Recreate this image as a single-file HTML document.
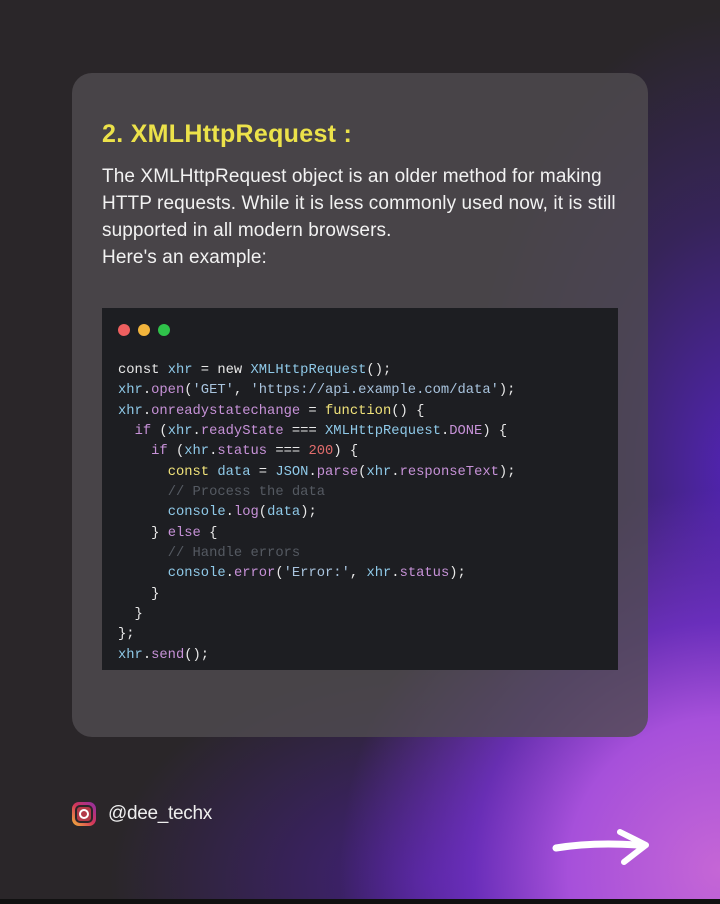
<!DOCTYPE html>
<html><head><meta charset="utf-8"><style>
html,body{margin:0;padding:0}
body{width:720px;height:904px;position:relative;overflow:hidden;background:#2a2629;font-family:"Liberation Sans",sans-serif}
.bg{position:absolute;inset:0;background:
radial-gradient(ellipse 380px 380px at 720px 870px,#c566d6 0%,#a650da 40%,rgba(120,50,210,0.75) 65%,rgba(60,30,110,0) 100%),
radial-gradient(ellipse 280px 460px at 740px 470px,rgba(85,35,190,0.95) 0%,rgba(65,35,130,0.55) 55%,rgba(40,30,50,0) 100%),
radial-gradient(ellipse 320px 220px at 430px 880px,rgba(70,30,140,0.85) 0%,rgba(50,30,80,0) 100%),
#2a2629;}
.strip{position:absolute;left:0;right:0;bottom:0;height:5px;background:#111}
.card{position:absolute;left:72px;top:73px;width:576px;height:664px;border-radius:20px;background:rgba(80,76,80,0.8)}
h2{position:absolute;left:102px;top:120px;margin:0;font-size:25px;font-weight:bold;color:#ece24a;letter-spacing:0.3px}
.p{position:absolute;left:102px;top:163px;color:#f2f2f2;font-size:19px;line-height:27px;white-space:nowrap;letter-spacing:0.1px}
.code{position:absolute;left:102px;top:308px;width:516px;height:362px;background:#1d1e22}
.dot{position:absolute;top:324px;width:12px;height:12px;border-radius:50%}
pre{position:absolute;left:118px;top:361px;margin:0;font-family:"Liberation Mono",monospace;font-size:13.8px;line-height:20.35px;color:#e8e8e8}
.b{color:#8fc9e8}.pu{color:#c792d8}.s{color:#a9c4de}.y{color:#f0e27a}.r{color:#e06c6c}.c{color:#555a62}
.ig{position:absolute;left:72px;top:802px;width:24px;height:24px;border-radius:7px;background:linear-gradient(45deg,#f2b43a,#d3365a,#8b2fa8)}
.ig i{position:absolute;left:3px;top:3px;width:14px;height:14px;border:2px solid #2a2629;border-radius:5px;background:#b23a48}
.ig b{position:absolute;left:7px;top:7px;width:6px;height:6px;border:2px solid #fff;border-radius:50%}
.h{position:absolute;left:108px;top:803px;color:#eee;font-size:19px;letter-spacing:-0.3px}
</style></head><body>
<div class="bg"></div>
<div class="card"></div>
<h2>2. XMLHttpRequest :</h2>
<div class="p">The XMLHttpRequest object is an older method for making<br>HTTP requests. While it is less commonly used now, it is still<br>supported in all modern browsers.<br>Here's an example:</div>
<div class="code"></div>
<div class="dot" style="left:118px;background:#ee5f5f"></div>
<div class="dot" style="left:138px;background:#f2b43c"></div>
<div class="dot" style="left:158px;background:#2fc24a"></div>
<pre>const <span class="b">xhr</span> = new <span class="b">XMLHttpRequest</span>();
<span class="b">xhr</span>.<span class="pu">open</span>(<span class="s">'GET'</span>, <span class="s">'https://api.example.com/data'</span>);
<span class="b">xhr</span>.<span class="pu">onreadystatechange</span> = <span class="y">function</span>() {
  <span class="pu">if</span> (<span class="b">xhr</span>.<span class="pu">readyState</span> === <span class="b">XMLHttpRequest</span>.<span class="pu">DONE</span>) {
    <span class="pu">if</span> (<span class="b">xhr</span>.<span class="pu">status</span> === <span class="r">200</span>) {
      <span class="y">const</span> <span class="b">data</span> = <span class="b">JSON</span>.<span class="pu">parse</span>(<span class="b">xhr</span>.<span class="pu">responseText</span>);
      <span class="c">// Process the data</span>
      <span class="b">console</span>.<span class="pu">log</span>(<span class="b">data</span>);
    } <span class="pu">else</span> {
      <span class="c">// Handle errors</span>
      <span class="b">console</span>.<span class="pu">error</span>(<span class="s">'Error:'</span>, <span class="b">xhr</span>.<span class="pu">status</span>);
    }
  }
};
<span class="b">xhr</span>.<span class="pu">send</span>();</pre>
<div class="ig"><i></i><b></b></div>
<div class="h">@dee_techx</div>
<svg style="position:absolute;left:552px;top:826px" width="100" height="44" viewBox="0 0 100 44">
<path d="M4 22 Q40 16 86 19" stroke="#fff" stroke-width="7" fill="none" stroke-linecap="round"/>
<path d="M68 6 L94 19 L72 36" stroke="#fff" stroke-width="6" fill="none" stroke-linecap="round" stroke-linejoin="round"/>
</svg>
<div class="strip"></div>
</body></html>
